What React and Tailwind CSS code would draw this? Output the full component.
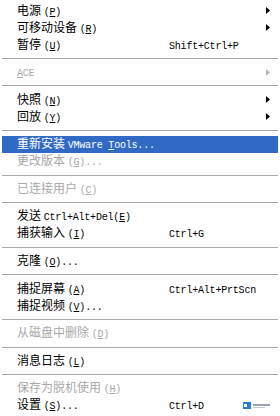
import React from 'react';

const cjk = '"Noto Sans CJK SC", "Liberation Sans", sans-serif';

const M = ({ children }) => <span className="underline underline-offset-[1px]">{children}</span>;

const Lat = ({ children }) => (
  <span className="font-['Liberation_Mono',monospace] text-[10px] tracking-[-0.2px]">{children}</span>
);

const Arrow = ({ disabled }) => (
  <svg width="4" height="7" viewBox="0 0 4 7" className="ml-auto mr-[8px]">
    <path d="M0 0 L4 3.5 L0 7 Z" fill={disabled ? '#b8b8b8' : '#000'} />
  </svg>
);

const Row = ({ label, shortcut, sub, disabled, active }) => (
  <div
    className={`flex items-center h-[17px] pl-[15px] ${active ? 'bg-[#316ac5] text-white' : disabled ? 'text-[#a8a8a8]' : 'text-black'}`}
  >
    <div className="w-[152px] shrink-0 whitespace-nowrap leading-none">{label}</div>
    {shortcut && <div className="whitespace-nowrap leading-none"><Lat>{shortcut}</Lat></div>}
    {sub && <Arrow disabled={disabled} />}
  </div>
);

const Sep = () => (
  <div className="h-[10.6px] flex items-center">
    <div className="w-full h-px bg-[#a9a9a9]" />
  </div>
);

export default function App() {
  return (
    <div className="relative w-[280px] h-[416px] bg-white overflow-hidden px-[2px] pt-[2px] text-[12px]" style={{ fontFamily: cjk }}>
      <Row label={<>电源 <Lat>(<M>P</M>)</Lat></>} sub />
      <Row label={<>可移动设备 <Lat>(<M>R</M>)</Lat></>} sub />
      <Row label={<>暂停 <Lat>(<M>U</M>)</Lat></>} shortcut="Shift+Ctrl+P" />
      <Sep />
      <Row label={<Lat><M>A</M>CE</Lat>} sub disabled />
      <Sep />
      <Row label={<>快照 <Lat>(<M>N</M>)</Lat></>} sub />
      <Row label={<>回放 <Lat>(<M>Y</M>)</Lat></>} sub />
      <Sep />
      <Row label={<>重新安装 <Lat>VMware <M>T</M>ools...</Lat></>} active />
      <Row label={<>更改版本 <Lat>(<M>G</M>)...</Lat></>} disabled />
      <Sep />
      <Row label={<>已连接用户 <Lat>(<M>C</M>)</Lat></>} disabled />
      <Sep />
      <Row label={<>发送 <Lat>Ctrl+Alt+Del(<M>E</M>)</Lat></>} />
      <Row label={<>捕获输入 <Lat>(<M>I</M>)</Lat></>} shortcut="Ctrl+G" />
      <Sep />
      <Row label={<>克隆 <Lat>(<M>O</M>)...</Lat></>} />
      <Sep />
      <Row label={<>捕捉屏幕 <Lat>(<M>A</M>)</Lat></>} shortcut="Ctrl+Alt+PrtScn" />
      <Row label={<>捕捉视频 <Lat>(<M>V</M>)...</Lat></>} />
      <Sep />
      <Row label={<>从磁盘中删除 <Lat>(<M>D</M>)</Lat></>} disabled />
      <Sep />
      <Row label={<>消息日志 <Lat>(<M>L</M>)</Lat></>} />
      <Sep />
      <Row label={<>保存为脱机使用 <Lat>(<M>H</M>)</Lat></>} disabled />
      <Row label={<>设置 <Lat>(<M>S</M>)...</Lat></>} shortcut="Ctrl+D" />

      {/* watermark */}
      <div className="absolute left-[243px] top-[402px] flex items-center gap-[2px]">
        <div className="w-[8px] h-[7px] bg-[#2a7fd4] relative">
          <div className="absolute left-[1px] top-[2px] w-[3px] h-[3px] bg-white" />
        </div>
        <div className="flex flex-col gap-[1px]">
          <div className="w-[17px] h-[2px] bg-[#9aa4b0]" />
          <div className="w-[12px] h-[1px] bg-[#c4cad2]" />
        </div>
      </div>
    </div>
  );
}
